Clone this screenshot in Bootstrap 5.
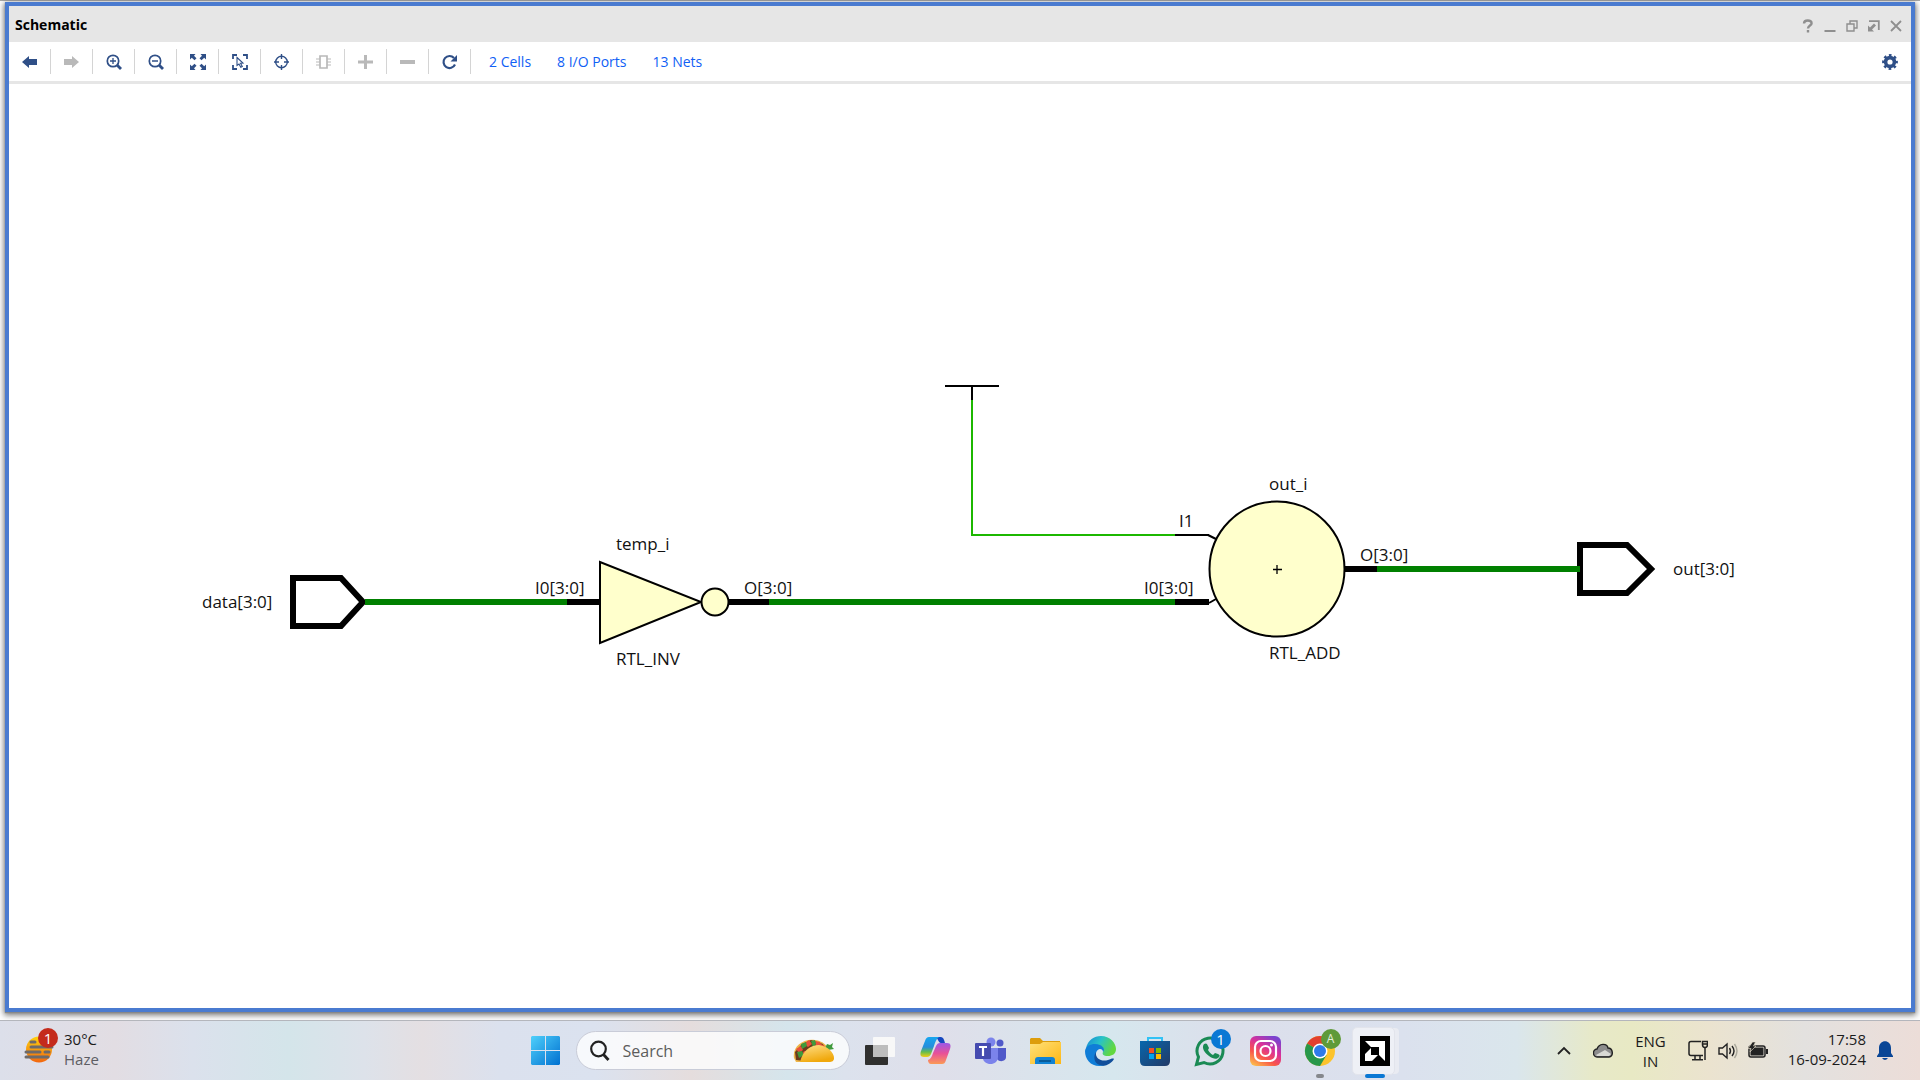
<!DOCTYPE html>
<html lang="en">
<head>
<meta charset="utf-8">
<meta name="viewport" content="width=device-width, initial-scale=1">
<title>Schematic</title>
<link href="https://cdn.jsdelivr.net/npm/bootstrap@5.3.0/dist/css/bootstrap.min.css" rel="stylesheet">
<style>
  :root { --navy: #2f4f87; --frame: #4a7bd0; --panel: #e6e6e6; --muted: #b9b9b9; }
  body { font-family: "Open Sans", "Noto Sans", sans-serif; background: #f6f6f6; color: #000; }
  .desk { padding: 2px 5px 8px; border-top: 1px solid #a8a8a8; background: #fff; }
  .window-frame { border: 4px solid var(--frame); background: #fff; margin-top: -1px; box-shadow: 0 1px 1px #888, 0 2px 6px 1px rgba(0,0,0,.55); }
  .title-strip { height: 36px; background: var(--panel); padding: 2px 4px 0 6px; }
  .title-strip h1 { font-size: 14px; line-height: 20px; font-weight: 700; }
  .title-btn { width: 22px; height: 24px; padding: 2px 0 0; border: 0; background: none; color: #8f8f8f; display: flex; align-items: center; justify-content: center; }
  .tools { height: 42px; border-bottom: 3px solid var(--panel); }
  .tool { width: 42px; height: 25px; padding: 0; border: 0; border-right: 1px solid #d4d4d4; background: none; color: var(--navy); display: flex; align-items: center; justify-content: center; }
  .tool:disabled { color: var(--muted); }
  .tool-gear { border: 0; }
  .stat-links { gap: 26px; padding-left: 18px; }
  .stat-links a { color: #1060f5; font-size: 14px; line-height: 20px; text-decoration: none; }
  .canvas-svg { display: block; width: 100%; height: 100%; }
  .canvas-svg text { font-size: 17px; fill: #111; }
  .crisp { shape-rendering: crispEdges; }
  .taskbar { height: 60px; border-top: 1px solid #b4b6bc; display: grid; grid-template-columns: 1fr auto 1fr; align-items: center; font-size: 15px; line-height: 20px; color: #1b1b1b;
    background: linear-gradient(90deg, #dcdfea 0%, #e2dde3 6%, #dbe1ec 10%, #d4e5ea 15%, #dde2ea 19%, #e4dfe2 22%, #dbe1ee 26%, #dbe2ef 31%, #e5dddd 36%, #d5e5ec 41%, #dce2ed 44%, #dfdfea 49%, #d6e7ee 58%, #dcdfeb 64%, #dbe1ee 73%, #dae6ec 79%, #e7e9c8 83%, #e8e9c4 85%, #ebe3cf 89%, #e3e1df 94%, #ecddd8 100%); }
  .flat { border: 0; background: none; padding: 0; color: inherit; }
  .two-line { padding-bottom: 4px; }
  .sub-text { color: #5d5d63; }
  .slot { width: 55px; height: 56px; display: flex; align-items: center; justify-content: center; position: relative; }
  .slot svg { overflow: visible; }
  .search-pill { width: 274px; height: 39px; margin: 0 3px; border-radius: 20px; background: rgba(255,255,255,.78); border: 1px solid #c9ccd8; padding: 0 15px 0 12px; gap: 12px; }
  .search-pill input { border: 0; background: none; outline: 0; min-width: 0; flex: 1; padding: 0; font-size: 16px; line-height: 24px; }
  .search-pill input::placeholder { color: #5c5c5c; opacity: 1; }
  .bubble { position: absolute; width: 20px; height: 20px; border-radius: 50%; font-size: 15px; line-height: 20px; text-align: center; color: #fff; top: 6px; right: 7px; }
  .bubble-blue { background: #0a78d4; }
  .bubble-green { background: #5f9a39; font-size: 12px; color: #e6f0dc; }
  .run-dot { position: absolute; bottom: 1px; width: 8px; height: 4px; border-radius: 2px; background: #85878c; }
  .run-bar { position: absolute; bottom: 1px; width: 20px; height: 4px; border-radius: 2px; background: #0a78d4; }
  .tile { position: absolute; width: 43px; height: 48px; border-radius: 5px; background: #eef0f6; border: 1px solid #e2e4ec; left: 4px; top: 4px; box-shadow: 5px 0 0 -1px #e9ebf2; }
  .weather { padding-left: 24px; gap: 6px; }
  .weather-icon { position: relative; width: 34px; height: 46px; }
  .weather-icon .bubble { background: #c42b1c; top: 0; right: 0; }
  .tray { padding-right: 27px; }
  .tray-gap { gap: 10px; }
  .gap-after { margin-right: 22px; }
  .gap-after-sm { margin-right: 11px; }
</style>
</head>
<body class="vh-100 d-flex flex-column overflow-hidden">
<div class="desk flex-grow-1 d-flex flex-column">
<main class="window-frame flex-grow-1 d-flex flex-column">
  <header class="title-strip d-flex align-items-center justify-content-between">
    <h1 class="m-0">Schematic</h1>
    <div class="d-flex">
      <button class="title-btn" type="button" aria-label="Help"><svg width="12" height="14" fill="none" stroke="currentColor" stroke-width="2.400"><path d="M2 4.500C2 0.500 9.600 .5 9.600 4.200C9.600 6.500 6 6.500 6 9.500M6 11v2.400"/></svg></button>
      <button class="title-btn" type="button" aria-label="Minimize"><svg width="12" height="14"><path d="M.5 11h11v2H.5z" fill="currentColor"/></svg></button>
      <button class="title-btn" type="button" aria-label="Restore"><svg width="12" height="12" fill="none" stroke="currentColor" stroke-width="1.400"><path d="M1 4h7v7H1zM4 4V1h7v7H8"/></svg></button>
      <button class="title-btn" type="button" aria-label="Float"><svg width="12" height="12"><path d="M1 1.200h9.800V10" fill="none" stroke="currentColor" stroke-width="1.800"/><path d="M0 5.500l2 2 4-4L8 5.500l-4 4 2 2H0z" fill="currentColor"/></svg></button>
      <button class="title-btn" type="button" aria-label="Close"><svg width="12" height="12" stroke="currentColor" stroke-width="1.800"><path d="M1 1l10 10M11 1L1 11"/></svg></button>
    </div>
  </header>
  <div class="tools d-flex align-items-center flex-shrink-0" role="toolbar" aria-label="Schematic tools">
    <button class="tool" type="button" aria-label="Back"><svg width="16" height="12" fill="currentColor"><path d="M0 6l7-6v3h8v6H7v3z"/></svg></button>
    <button class="tool" type="button" aria-label="Forward" disabled><svg width="16" height="12" fill="currentColor"><path d="M15 6L8 0v3H0v6h8v3z"/></svg></button>
    <button class="tool" type="button" aria-label="Zoom in"><svg width="16" height="16" fill="none" stroke="currentColor"><circle cx="7" cy="7" r="5.700" stroke-width="1.700"/><path d="M7 4v6M4 7h6" stroke-width="1.300"/><path d="M11 11l4 4" stroke-width="2.800"/></svg></button>
    <button class="tool" type="button" aria-label="Zoom out"><svg width="16" height="16" fill="none" stroke="currentColor"><circle cx="7" cy="7" r="5.700" stroke-width="1.700"/><path d="M4 7h6" stroke-width="1.500"/><path d="M11 11l4 4" stroke-width="2.800"/></svg></button>
    <button class="tool" type="button" aria-label="Zoom fit"><svg width="16" height="16"><path d="M0 0h5.500L4 1.700l2.500 2.500-2 2L1.800 3.800 0 5.500zM16 0v5.500l-1.800-1.700-2.700 2.400-2-2L12 1.700 10.500 0zM0 16v-5.500l1.800 1.700 2.700-2.400 2 2L4 14.300 5.500 16zM16 16h-5.500l1.500-1.700-2.500-2.500 2-2 2.700 2.400 1.800-1.700z" fill="currentColor"/></svg></button>
    <button class="tool" type="button" aria-label="Select area"><svg width="16" height="16" fill="none" stroke="currentColor"><path d="M1 5V1h4M11 1h4v4M15 11v4h-4M5 15H1v-4" stroke-width="1.800"/><path d="M5 3.500l6 5.500-2.500.3 1.800 3.200-1.500.8-1.800-3.300L5 11.500z" stroke-width="1.100"/></svg></button>
    <button class="tool" type="button" aria-label="Auto fit selection"><svg width="16" height="16" fill="none" stroke="currentColor"><circle cx="7.500" cy="8" r="5.800" stroke-width="1.400"/><path d="M7.500 0v5M7.500 11v5M0 8h5M10 8h5" stroke-width="1.400"/></svg></button>
    <button class="tool" type="button" aria-label="Expand cell" disabled><svg width="16" height="16" fill="none" stroke="currentColor"><path d="M4 2h7v12H4z" stroke-width="1.700"/><path d="M0 5h4M0 8h4M0 11h4M11 5h4M11 8h4M11 11h4" stroke-width="1.100"/></svg></button>
    <button class="tool" type="button" aria-label="Add" disabled><svg width="16" height="16"><path d="M6 1h3v5.500h6v3H9V15H6V9.500H0v-3h6z" fill="currentColor"/></svg></button>
    <button class="tool" type="button" aria-label="Remove" disabled><svg width="16" height="16"><path d="M0 6h15v4H0z" fill="currentColor"/></svg></button>
    <button class="tool" type="button" aria-label="Reload"><svg width="16" height="16"><path d="M13 10.500A6 6 0 1 1 12 4" fill="none" stroke="currentColor" stroke-width="2.200"/><path d="M15 1v6.500H8.500z" fill="currentColor"/></svg></button>
    <nav class="stat-links d-flex" aria-label="Object counts"><a href="#cells">2 Cells</a><a href="#ports">8 I/O Ports</a><a href="#nets">13 Nets</a></nav>
    <button class="tool tool-gear ms-auto" type="button" aria-label="Settings"><svg width="16" height="16"><circle cx="8" cy="8" r="6.600" fill="none" stroke="currentColor" stroke-width="2.600" stroke-dasharray="2.600 2.584" stroke-dashoffset="1.300"/><circle cx="8" cy="8" r="4.400" fill="none" stroke="currentColor" stroke-width="3.600"/></svg></button>
  </div>
  <section class="flex-grow-1 position-relative" aria-label="Schematic canvas">
    <svg class="canvas-svg position-absolute top-0 start-0" viewBox="9 84 1902 924" role="img">
      <g class="crisp" fill="none" stroke="#008000" stroke-width="6"><path d="M367 602H567M769 602H1175M1377 569H1580"/></g>
      <path class="crisp" d="M972 400V535H1175" fill="none" stroke="#1cb800" stroke-width="2"/>
      <g class="crisp" stroke="#000" fill="none"><path d="M567 602h33M729 602h40M1175 602h34M1344 569h33" stroke-width="6"/><path d="M945 386h54M972 386v14M1175 535h34" stroke-width="2"/></g>
      <path d="M1208 535l8 4M1209 603l7-4" stroke="#000" stroke-width="2"/>
      <g fill="#fff" stroke="#000" stroke-width="6"><path d="M293 578h48l22 24-22 24h-48z"/><path d="M1580 545h47l24 24-24 24h-47z"/></g>
      <path class="crisp" d="M1577 569h3M365 602h3" stroke="#008000" stroke-width="6"/>
      <g fill="#ffffcc" stroke="#000" stroke-width="2"><path d="M600 562v81l101-41z"/><circle cx="715" cy="602" r="13.500"/><circle cx="1277" cy="569" r="67.500"/></g>
      <path d="M1277 565v9M1273 569.500h9" stroke="#000" stroke-width="1.300"/>
      <text x="202" y="608">data[3:0]</text><text x="535" y="594">I0[3:0]</text><text x="616" y="550">temp_i</text><text x="616" y="665">RTL_INV</text><text x="744" y="594">O[3:0]</text>
      <text x="1179" y="527">I1</text><text x="1144" y="594">I0[3:0]</text><text x="1269" y="490">out_i</text><text x="1269" y="659">RTL_ADD</text><text x="1360" y="561">O[3:0]</text><text x="1673" y="575">out[3:0]</text>
    </svg>
  </section>
</main>
</div>
<footer class="taskbar flex-shrink-0">
  <button class="flat weather d-flex align-items-center text-start" type="button">
    <span class="weather-icon"><svg width="34" height="46"><defs><linearGradient id="sun" x2="0" y2="1"><stop stop-color="#fdd20e"/><stop offset="1" stop-color="#f2660f"/></linearGradient></defs><circle cx="15" cy="21.500" r="13" fill="url(#sun)"/><path d="M7 14h4M7 19h21M2 24h14M21 24h4M2 29h22" stroke="#6d6a6a" stroke-width="3" stroke-linecap="round"/></svg><span class="bubble">1</span></span>
    <span class="two-line"><span class="d-block">30°C</span><span class="d-block sub-text">Haze</span></span>
  </button>
  <div class="d-flex align-items-center">
    <button class="slot flat" type="button" aria-label="Start"><svg width="29" height="29"><defs><linearGradient id="win" gradientUnits="userSpaceOnUse" x2="29" y2="29"><stop stop-color="#4fd0fb"/><stop offset="1" stop-color="#0070d0"/></linearGradient></defs><path d="M1 0h13v14H0V1zM15 0h13l1 1v13H15zM0 15h14v14H1l-1-1zM15 15h14v13l-1 1H15z" fill="url(#win)"/></svg></button>
    <label class="search-pill d-flex align-items-center">
      <svg width="22" height="22" fill="none" stroke="#222" stroke-width="2.200"><circle cx="9.500" cy="9" r="7.300"/><path d="M14.500 14.500l5 5.500" stroke-width="2.800"/></svg>
      <input type="search" placeholder="Search" aria-label="Search">
      <svg width="41" height="24"><defs><linearGradient id="shell" x2=".4" y2="1"><stop stop-color="#ffe08a"/><stop offset="1" stop-color="#f0a80c"/></linearGradient></defs>
        <path d="M1 19C-1 8 10-1 22 1c8 1 13 6 14 11L10 23H3z" fill="#efb649"/><path d="M2 13L9 5l9-4 12 4 3 8-22 9-8-1z" fill="#6d3b1c"/>
        <path d="M3 10l5-3 2 4-4 3zM11 5l5-4 3 4-4 3zM22 2l5 1 2 4-6 1zM11 12l4 1-3 5-4-1zM28 5l4 2-2 3z" fill="#e8513a"/><path d="M8 5l5-2 1 4-5 3zM18 2l4-1 1 4-3 3zM4 13l5-1 2 4-5 3zM34 5l3 1 3-2-1 4 2 2-6 1-3-2z" fill="#3f9a3c"/>
        <path d="M7 23C10 11 18 6 26 6c9 1 15 8 15 13 0 3-2 4-5 4z" fill="url(#shell)"/></svg>
    </label>
    <button class="slot flat" type="button" aria-label="Task view"><svg width="30" height="28"><rect y="8" width="23" height="20" rx="1" fill="#30302f"/><rect x="8" width="22" height="20" rx="1" fill="#f8f8f8"/><path d="M8 8h15v12H8z" fill="#bdbdbd"/></svg></button>
    <button class="slot flat" type="button" aria-label="Copilot"><svg width="31" height="28"><defs><linearGradient id="cpa" x2="0" y2="1"><stop stop-color="#17a6ef"/><stop offset=".5" stop-color="#268ddc"/><stop offset=".75" stop-color="#64bd4e"/><stop offset="1" stop-color="#f4cd14"/></linearGradient><linearGradient id="cpb" x2="0" y2="1"><stop stop-color="#9a58e7"/><stop offset=".5" stop-color="#e95197"/><stop offset="1" stop-color="#fb9a55"/></linearGradient></defs>
      <path d="M15 0h6c2 0 3 2 4 6h-4c-3 0-3-6-6-6z" fill="#1647bf"/><path d="M9 0h10c-3 2-4 6-5 9l-3 8c-1 2-2 3-4 3H4c-4 0-4-3-3-6L5 4c1-3 2-4 4-4z" fill="url(#cpa)"/><path d="M22 27H11c-2 0-3-2-3-4 3-1 4-4 5-7l3-7c1-2 2-3 4-3h7c4 0 4 3 3 6l-4 11c-1 3-2 4-4 4z" fill="url(#cpb)"/></svg></button>
    <button class="slot flat" type="button" aria-label="Teams"><svg width="31" height="28"><circle cx="25" cy="6" r="3.500" fill="#5059c9"/><path d="M20 11h11v9c0 4-6 6-9 2z" fill="#5059c9"/><circle cx="16" cy="5" r="4.500" fill="#7b83eb"/><path d="M8 11h15v9c0 9-13 9-15 2z" fill="#7b83eb"/><rect y="6" width="16" height="16" rx="1" fill="#454bb0"/><path d="M4 10h8M8 10v9" stroke="#fff" stroke-width="2.200"/></svg></button>
    <button class="slot flat" type="button" aria-label="File Explorer"><svg width="31" height="28"><defs><linearGradient id="fold" x2="1" y2="1"><stop stop-color="#ffe17a"/><stop offset="1" stop-color="#fdb714"/></linearGradient></defs><path d="M1 1h9l3 3h17v6H0V2z" fill="#dd9d0b"/><path d="M0 7h10l3-2h18v22H0z" fill="url(#fold)"/><path d="M5 27v-4q0-3 3-3h14q3 0 3 3v4z" fill="#1183d4"/><path d="M9 24h12" stroke="#064f87" stroke-width="1.500"/></svg></button>
    <button class="slot flat" type="button" aria-label="Edge"><svg width="31" height="30"><defs><linearGradient id="eda" x2="1" y2=".4"><stop stop-color="#1685d8"/><stop offset=".5" stop-color="#28c2c8"/><stop offset="1" stop-color="#62d83f"/></linearGradient></defs><path d="M1 12C3 4 9 0 16 0c9 0 15 7 15 13 0 5-4 7-8 7-5 0-6-2-5-4 3-5-5-9-17-4z" fill="url(#eda)"/><path d="M0 15C1 8 10 7 15 9c4 2 5 5 3 7 0-3-5-5-7 1-1 7 4 12 10 12C8 33 0 25 0 15z" fill="#0f7dd7"/><path d="M11 16c-1 7 6 10 12 8 3-1 5-2 6-1-3 5-9 8-14 6-6-1-7-9-4-13z" fill="#114f9b"/></svg></button>
    <button class="slot flat" type="button" aria-label="Microsoft Store"><svg width="30" height="30"><defs><linearGradient id="sto" x2="1" y2="1"><stop stop-color="#0767ad"/><stop offset="1" stop-color="#233a67"/></linearGradient></defs><path d="M8 6V2h14v4" fill="none" stroke="#31c2f5" stroke-width="2"/><path d="M0 5h30v20q0 5-5 5H5q-5 0-5-5z" fill="url(#sto)"/><path d="M9 12h5v5H9z" fill="#f25022"/><path d="M16 12h5v5h-5z" fill="#7fba00"/><path d="M9 18h5v5H9z" fill="#00a4ef"/><path d="M16 18h5v5h-5z" fill="#ffb900"/></svg></button>
    <button class="slot flat" type="button" aria-label="WhatsApp"><svg width="30" height="30"><path d="M1.500 28.500l2-7.500A13 13 0 1 1 9 26.500z" fill="none" stroke="#1a8a54" stroke-width="3"/><path d="M9 8c2-1 3-1 4 2l1 2-1 2c2 3 3 4 5 5l2-2 3 1c2 1 2 2 1 3-2 3-6 2-10-1S6 12 9 8z" fill="#1a8a54"/></svg><span class="bubble bubble-blue">1</span></button>
    <button class="slot flat" type="button" aria-label="Instagram"><svg width="31" height="30"><defs><linearGradient id="iga" x1=".1" y1="1" x2=".7" y2="0"><stop stop-color="#fdc34b"/><stop offset=".35" stop-color="#f9564a"/><stop offset=".65" stop-color="#d9319a"/><stop offset="1" stop-color="#7a43cf"/></linearGradient></defs><rect width="31" height="30" rx="6" fill="url(#iga)"/><g fill="none" stroke="#fff" stroke-width="2.200"><rect x="5" y="5" width="21" height="20" rx="6"/><circle cx="15.500" cy="15" r="5"/></g><circle cx="21.500" cy="9" r="1.500" fill="#fff"/></svg></button>
    <button class="slot flat" type="button" aria-label="Chrome"><svg width="30" height="30"><circle cx="15" cy="15" r="15" fill="#fcc32c"/><path d="M15 15L2 7.500A15 15 0 0 1 28 7.500z" fill="#e2402f"/><path d="M2 7.500A15 15 0 0 0 15 30l6.500-11L15 15z" fill="#27974a"/><circle cx="15" cy="15" r="7.500" fill="#fff"/><circle cx="15" cy="15" r="6" fill="#2e7be9"/></svg><span class="bubble bubble-green">A</span><span class="run-dot"></span></button>
    <button class="slot flat" type="button" aria-label="Vivado"><span class="tile"></span><svg class="position-relative" width="30" height="30"><path d="M0 0h30v30H0z"/><path d="M5 5h20v20l-6-6v-8h-8z" fill="#fff"/><path d="M11 12v7h7l-6 6H5v-7z" fill="#fff"/></svg><span class="run-bar"></span></button>
  </div>
  <div class="tray d-flex align-items-center justify-content-end">
    <button class="flat gap-after" type="button" aria-label="Hidden icons"><svg class="d-block" width="14" height="9"><path d="M1 8l6-6 6 6" fill="none" stroke="#222" stroke-width="1.800"/></svg></button>
    <button class="flat gap-after" type="button" aria-label="OneDrive"><svg class="d-block" width="20" height="15"><path d="M5 14a4 4 0 0 1-1-8C6 0 14 0 15 5c5 0 6 8 1 9z" fill="#8d8d8d" stroke="#222" stroke-width="1.400"/><path d="M3 12l9-5 6 4-2 2H4z" fill="#d9d9d4"/></svg></button>
    <button class="flat text-center gap-after" type="button"><span class="d-block">ENG</span><span class="d-block">IN</span></button>
    <button class="flat d-flex tray-gap align-items-center" type="button" aria-label="Quick settings">
      <svg width="20" height="21" fill="none" stroke="#222" stroke-width="1.500"><path d="M13 1.500H3q-2 0-2 2v10q0 2 2 2h12M7 16v3.500M12 16v3.500M4 19.800h11M17 7v13"/><path d="M14.500 1.500h5v3q0 3-2.500 3t-2.500-3zM14.500 4h5"/></svg>
      <svg width="20" height="18" fill="none" stroke="#222" stroke-width="1.400"><path d="M1 6h3.500L9 2v14l-4.500-4H1z"/><path d="M11.500 6q2 3 0 6M14 4q4 5 0 10"/><path d="M16.500 2q5 7 0 14" stroke="#aaa89c"/></svg>
      <svg width="20" height="18"><rect x="1" y="4" width="16" height="11" rx="2" fill="none" stroke="#222" stroke-width="1.500"/><path d="M2.500 5.500h13v8h-13zM18 7h2v5h-2z" fill="#222"/><path d="M4.500 0L0 6.500h3L2 10l6-6H5.500L7.500 0z" fill="#222" stroke="#ebe3cf" stroke-width=".6"/></svg>
    </button>
    <button class="flat text-end two-line ms-3 ps-1 gap-after-sm" type="button"><span class="d-block">17:58</span><span class="d-block">16-09-2024</span></button>
    <button class="flat" type="button" aria-label="Notifications"><svg class="d-block" width="16" height="20"><path d="M0 16v-1l2-3V7c0-9 12-9 12 0v5l2 3v1zM5 17h6q-3 4-6 0z" fill="#0a4696"/></svg></button>
  </div>
</footer>
<script src="https://cdn.jsdelivr.net/npm/bootstrap@5.3.0/dist/js/bootstrap.bundle.min.js"></script>
</body>
</html>
